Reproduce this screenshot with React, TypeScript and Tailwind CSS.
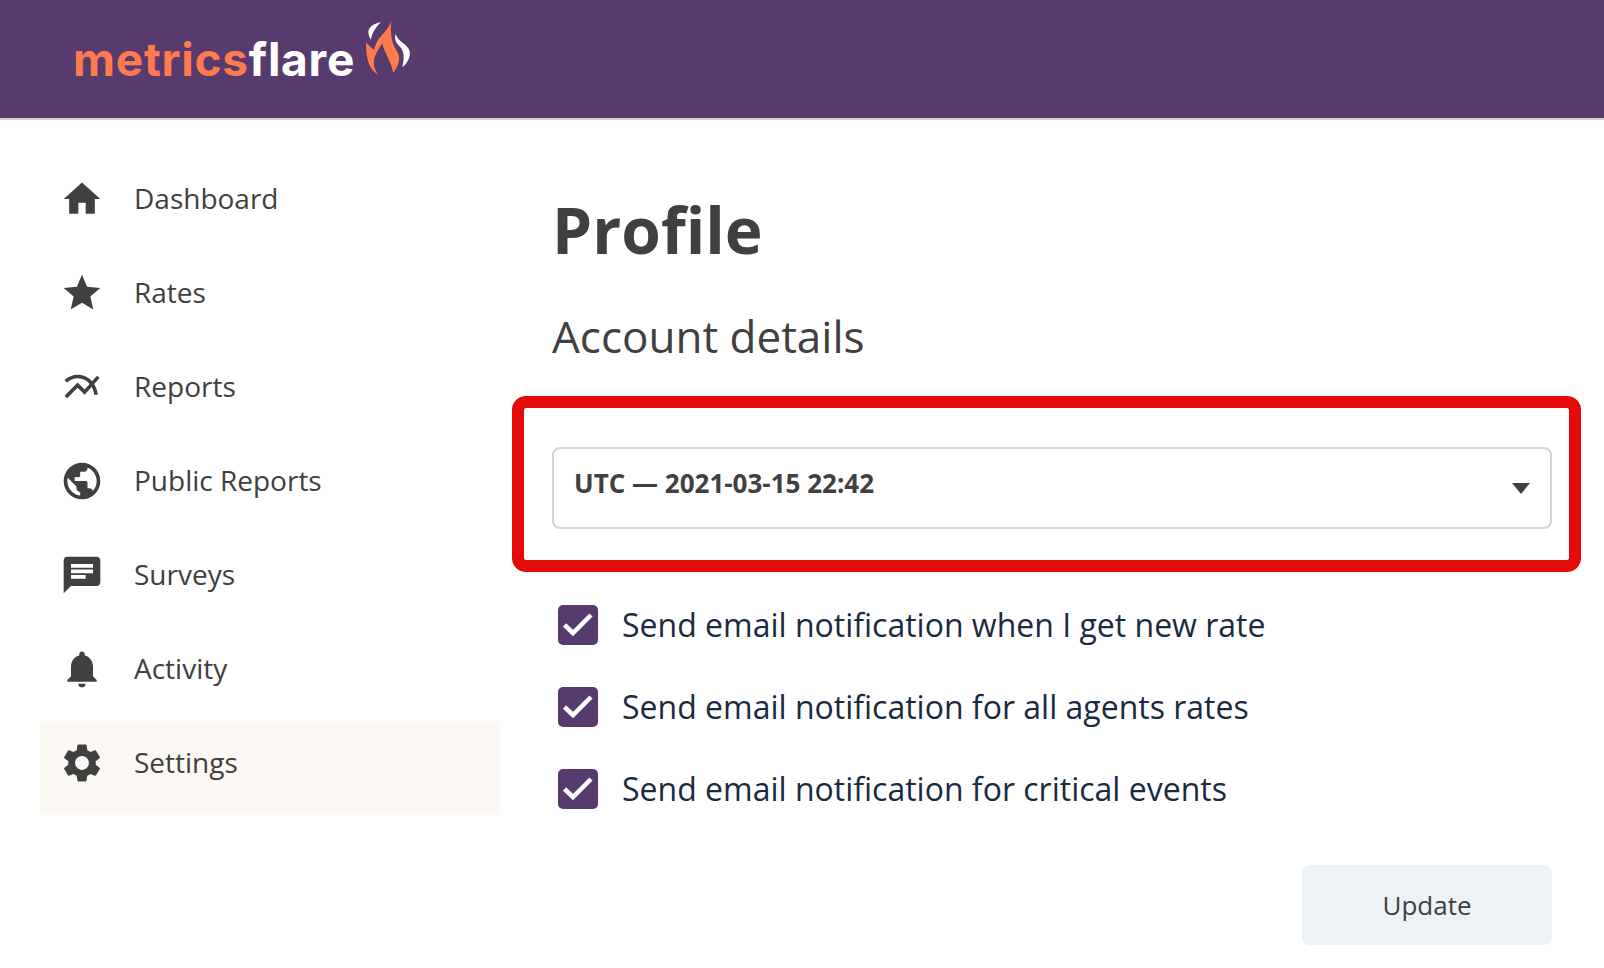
import { MdHome, MdStar, MdMultilineChart, MdChat, MdNotifications, MdPublic, MdSettings } from "react-icons/md";

const nav = [
  { label: "Dashboard", icon: <MdHome size={44} className="-m-1" /> },
  { label: "Rates", icon: <MdStar size={44} className="-m-1" /> },
  { label: "Reports", icon: <MdMultilineChart size={42} className="-m-[3px]" /> },
  { label: "Public Reports", icon: <MdPublic size={44} className="-m-1" /> },
  { label: "Surveys", icon: <MdChat size={44} className="-m-1" /> },
  { label: "Activity", icon: <MdNotifications size={44} className="-m-1" /> },
  { label: "Settings", icon: <MdSettings size={46} className="-m-[5px]" />, active: true },
];

const options = [
  "Send email notification when I get new rate",
  "Send email notification for all agents rates",
  "Send email notification for critical events",
];

function Flame() {
  return (
    <svg width="60" height="70" viewBox="0 0 180 210" className="-mt-[20px] -ml-[1px]">
      <path d="M80 25C62 28 46 38 43 52C43 60 45 68 50 77C55 57 64 40 80 25Z" fill="#fff" />
      <path
        d="M112 15C110 40 88 55 72 78C66 88 62 100 60 108C54 104 44 95 37 85C35 110 38 140 50 160C56 170 64 178 74 184C62 170 56 150 62 130C68 112 78 100 85 88C88 110 108 135 118 176C130 160 140 140 133 120C125 100 105 85 112 15Z"
        fill="#ff7a4d"
      />
      <path d="M125 60C120 75 126 88 138 98C150 110 152 130 145 160C162 146 170 128 167 112C162 90 132 85 125 60Z" fill="#fff" />
    </svg>
  );
}

export default function App() {
  return (
    <div className="min-h-[968px] bg-white font-['Open_Sans',sans-serif] text-[#404040]">
      <header className="flex h-[120px] items-center border-b-2 border-[#d4d4d8] bg-[#573b6e] pl-[73px]">
        <span className="font-['Inter',sans-serif] text-[46px] font-bold leading-none tracking-[0.75px] text-[#ff7a4d]">
          metrics<span className="text-white">flare</span>
        </span>
        <Flame />
      </header>
      <div className="flex">
        <nav className="ml-[40px] mt-[37px] w-[460px] shrink-0">
          {nav.map((n) => (
            <div
              key={n.label}
              className={`flex h-[94px] items-center pb-[12px] pl-[24px] ${n.active ? "bg-[#fcf8f4]" : ""}`}
            >
              <span className="mt-[1px] flex w-[70px] shrink-0 items-center justify-start">{n.icon}</span>
              <span className="text-[28px] leading-none">{n.label}</span>
            </div>
          ))}
        </nav>
        <main className="ml-[52px] w-[1000px]">
          <h1 className="mt-[66px] text-[64px] font-bold leading-[88px]">Profile</h1>
          <h2 className="mt-[32px] text-[44px] leading-[60px]">Account details</h2>
          <div className="-ml-[40px] -mr-[29px] mt-[30px] rounded-[14px] border-[12px] border-[#e30a0a] pb-[31px] pl-[28px] pr-[17px] pt-[39px]">
            <div className="flex h-[82px] items-center justify-between rounded-lg border-2 border-[#d1d5db] pl-[20px] pr-[20px]">
              <span className="-mt-[10px] text-[26px] font-bold">UTC — 2021-03-15 22:42</span>
              <span className="mt-[1px] h-0 w-0 border-x-[9px] border-t-[11px] border-x-transparent border-t-[#404040]" />
            </div>
          </div>
          <div className="mt-[33px] flex flex-col gap-[42px]">
            {options.map((o) => (
              <label key={o} className="flex h-[40px] items-center pl-[6px]">
                <span className="flex h-[40px] w-[40px] items-center justify-center rounded-[5px] bg-[#573b6e]">
                  <svg width="40" height="40" viewBox="0 0 40 40" fill="none" stroke="#fff" strokeWidth="4.5">
                    <path d="M6.5 20L15 28L33 10" />
                  </svg>
                </span>
                <span className="ml-[24px] text-[32px] leading-none text-[#1a2b3f]">{o}</span>
              </label>
            ))}
          </div>
          <div className="mt-[56px] flex justify-end">
            <button className="h-[80px] w-[250px] rounded-lg bg-[#edf2f7] text-[26px]">Update</button>
          </div>
        </main>
      </div>
    </div>
  );
}
